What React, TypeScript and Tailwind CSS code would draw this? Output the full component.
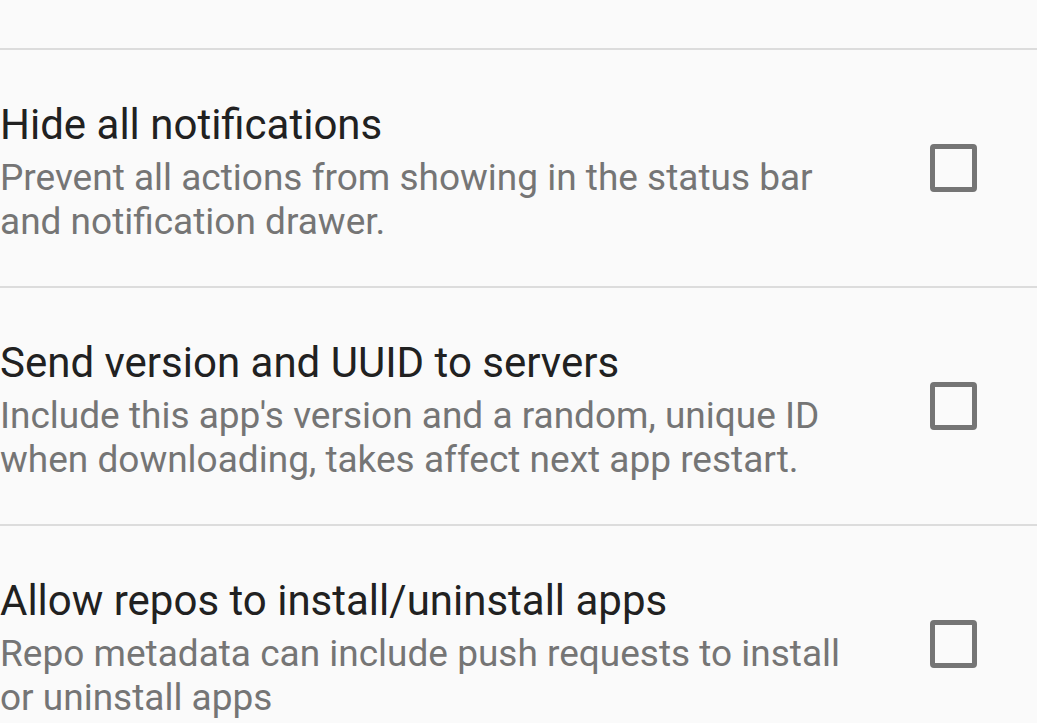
import React from 'react';

interface Pref {
  title: string;
  summary: string[];
}

const PREFS: Pref[] = [
  {
    title: 'Hide all notifications',
    summary: ['Prevent all actions from showing in the status bar', 'and notification drawer.'],
  },
  {
    title: 'Send version and UUID to servers',
    summary: ["Include this app's version and a random, unique ID", 'when downloading, takes affect next app restart.'],
  },
  {
    title: 'Allow repos to install/uninstall apps',
    summary: ['Repo metadata can include push requests to install', 'or uninstall apps'],
  },
];

const CheckRow: React.FC<{ pref: Pref }> = ({ pref }) => {
  return (
    <div className="border-t-2 border-[#dcdcdc] flex h-[238px]">
      <div className="flex-1 min-w-0 pt-[50px]">
        <div className="text-[42px] leading-[50px] text-[#212121] whitespace-nowrap">{pref.title}</div>
        <div className="mt-[6px] text-[37px] leading-[44px] text-[#757575]">
          {pref.summary.map((line) => (
            <div key={line} className="whitespace-nowrap">{line}</div>
          ))}
        </div>
      </div>
      <div className="self-center w-[47px] h-[48px] mr-[60px] border-[5px] border-[#757575] rounded-[4px] shrink-0" />
    </div>
  );
};

export default function App() {
  return (
    <div className="w-[1037px] h-[723px] overflow-hidden bg-[#fafafa] font-['Roboto',sans-serif]">
      <div className="h-[48px]" />
      {PREFS.map((p) => (
        <CheckRow key={p.title} pref={p} />
      ))}
    </div>
  );
}
